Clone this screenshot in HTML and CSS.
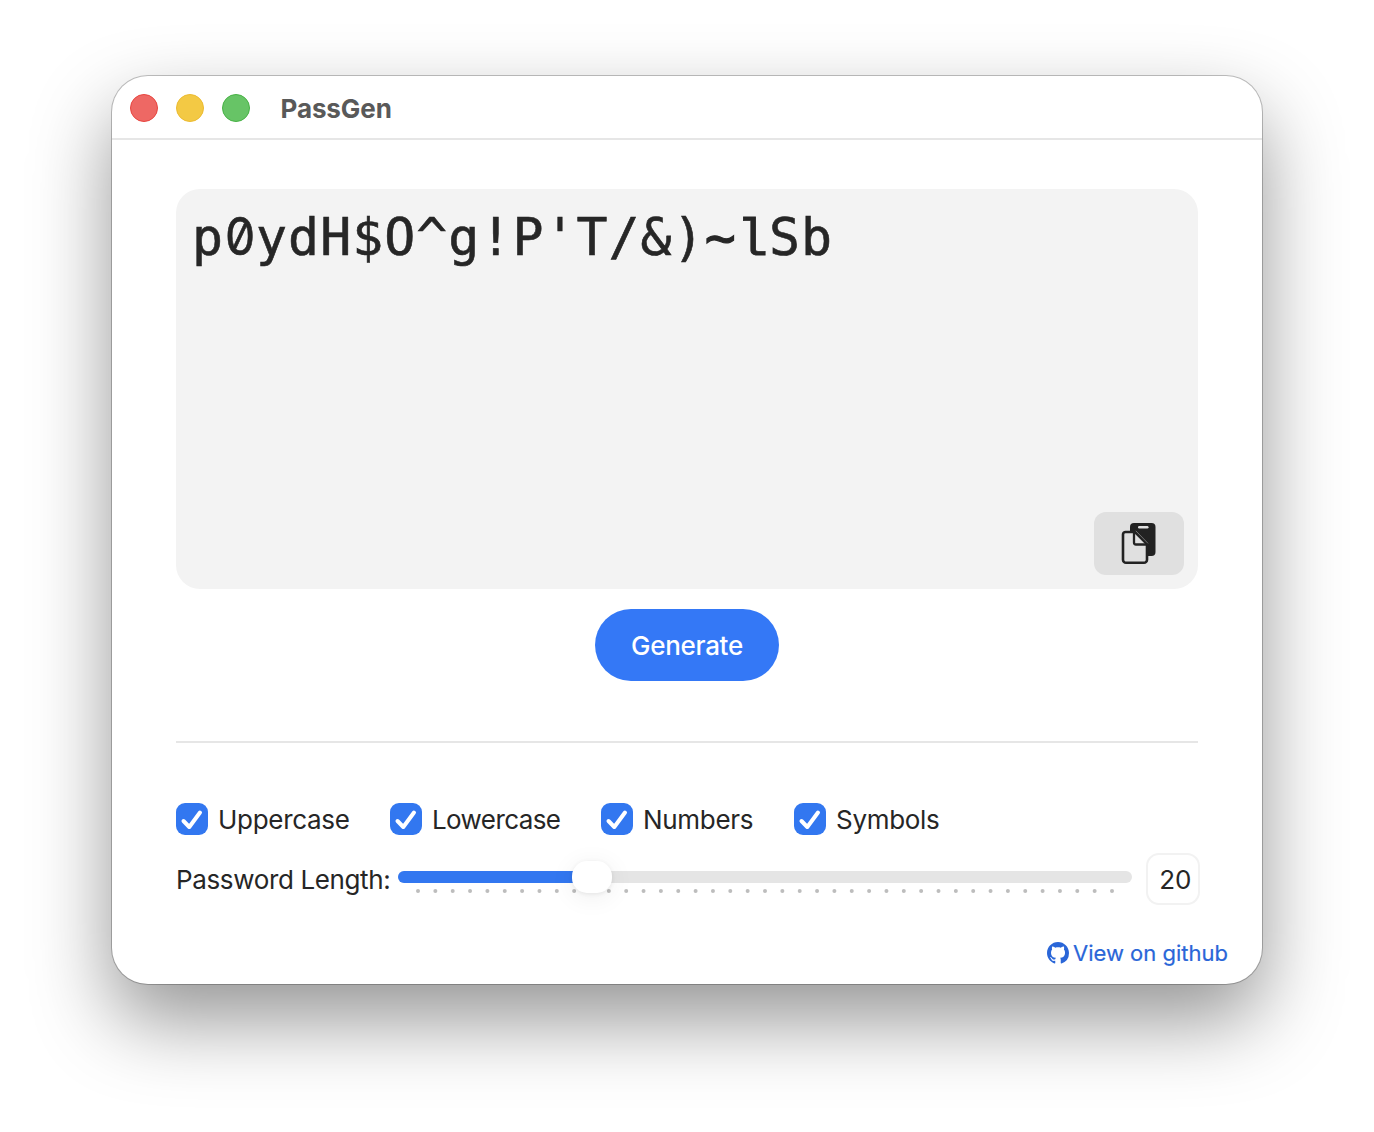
FILE: index.html
```html
<!DOCTYPE html>
<html lang="en">
<head>
<meta charset="utf-8">
<title>PassGen</title>
<link rel="stylesheet" href="styles.css">
</head>
<body>
<main class="window">
  <header class="titlebar">
    <span class="light light-close"></span>
    <span class="light light-minimize"></span>
    <span class="light light-zoom"></span>
    <h1 class="title">PassGen</h1>
  </header>
  <section class="content">
    <div class="output">
      <div class="password">p<span class="zero">0</span>ydH$O^g!P'T/&amp;)<span class="tilde">~</span><span class="ell">l</span>Sb</div>
      <button class="copy" aria-label="Copy">
        <svg width="36" height="44" viewBox="0 0 36 44">
          <rect x="9" y="1" width="25.500" height="33" rx="4" fill="#222"/>
          <rect x="17" y="4" width="10.500" height="2.500" rx="1.200" fill="#e0e0e0"/>
          <path d="M4.500 10H14L26 22V37.800A3 3 0 0 1 23 40.800H5A3 3 0 0 1 2 37.800V12.500A2.500 2.500 0 0 1 4.500 10Z" fill="#e0e0e0" stroke="#222" stroke-width="2.600"/>
          <path d="M13 10V20.500A2 2 0 0 0 15 22.500H26" fill="none" stroke="#222" stroke-width="2.300"/>
          <path d="M14.800 8.800L27 21.400" stroke="#888" stroke-width=".8"/>
        </svg>
      </button>
    </div>
    <button class="generate">Generate</button>
    <hr class="divider">
    <div class="options">
      <label class="option option-upper"><span class="box"><svg width="32" height="32" viewBox="0 0 32 32"><path d="M7.500 18L13.300 24L24 9.500"/></svg></span><span class="label">Uppercase</span></label>
      <label class="option option-lower"><span class="box"><svg width="32" height="32" viewBox="0 0 32 32"><path d="M7.500 18L13.300 24L24 9.500"/></svg></span><span class="label label-tight">Lowercase</span></label>
      <label class="option option-numbers"><span class="box"><svg width="32" height="32" viewBox="0 0 32 32"><path d="M7.500 18L13.300 24L24 9.500"/></svg></span><span class="label">Numbers</span></label>
      <label class="option option-symbols"><span class="box"><svg width="32" height="32" viewBox="0 0 32 32"><path d="M7.500 18L13.300 24L24 9.500"/></svg></span><span class="label">Symbols</span></label>
    </div>
    <div class="length">
      <span class="length-label">Password Length:</span>
      <div class="slider">
        <div class="track"><div class="fill"></div></div>
        <svg class="ticks" width="734" height="6" viewBox="0 0 734 6"><path d="M20 3H715"/></svg>
        <span class="thumb"></span>
      </div>
      <span class="value">20</span>
    </div>
    <a class="github" href="#">
      <svg width="22" height="22" viewBox="0 0 16 16"><path fill="#2a66d8" d="M8 0C3.580 0 0 3.580 0 8c0 3.540 2.290 6.530 5.470 7.590.4.070.55-.17.55-.38 0-.19-.01-.82-.01-1.490-2.010.37-2.530-.49-2.690-.94-.09-.23-.48-.94-.82-1.130-.28-.15-.68-.52-.01-.53.63-.01 1.080.58 1.230.82.72 1.210 1.870.87 2.330.66.070-.52.28-.87.51-1.070-1.780-.2-3.640-.89-3.640-3.950 0-.87.31-1.590.82-2.150-.08-.2-.36-1.020.08-2.120 0 0 .67-.21 2.200.82.64-.18 1.320-.27 2-.27s1.360.09 2 .27c1.530-1.040 2.200-.82 2.200-.82.44 1.100.16 1.920.08 2.120.51.56.82 1.270.82 2.150 0 3.070-1.870 3.750-3.650 3.950.29.25.54.73.54 1.480 0 1.070-.01 1.930-.01 2.200 0 .21.15.46.55.38A8.010 8.010 0 0 0 16 8c0-4.420-3.580-8-8-8"/></svg>
      <span class="github-text">View on github</span>
    </a>
  </section>
</main>
</body>
</html>
```
FILE: styles.css
```css
* { box-sizing: border-box; }
body {
  margin: 0;
  height: 1132px;
  padding: 76px 112px;
  background: #fff;
  color: #262626;
  font-family: Inter, "Liberation Sans", sans-serif;
  font-size: 26px;
  overflow: hidden;
}
button { border: 0; padding: 0; font: inherit; }
.window {
  width: 1150px;
  height: 908px;
  border-radius: 36px;
  background: #fff;
  box-shadow: 0 0 0 1px rgba(0, 0, 0, .23), 0 36px 80px rgba(0, 0, 0, .42);
}
.titlebar {
  height: 64px;
  padding: 0 18px 0;
  border-bottom: 2px solid #e6e6e6;
  display: flex;
  align-items: center;
  gap: 18px;
}
.light { width: 28px; height: 28px; border-radius: 50%; border: 1px solid; margin-top: 2px; }
.light-close { background: #ee6864; border-color: #e8453f; }
.light-minimize { background: #f3c944; border-color: #ecbb30; }
.light-zoom { background: #67c466; border-color: #47b245; }
.title {
  margin: 3px 0 0 12.5px;
  font-size: 26px;
  font-weight: 700;
  line-height: 32px;
  letter-spacing: -.1px;
  color: #595959;
}
.content { padding: 49px 64px 0; display: flex; flex-direction: column; }
.output {
  height: 400px;
  padding: 13px 14px 14px 16px;
  border-radius: 24px;
  background: #f3f3f3;
  display: flex;
  flex-direction: column;
  justify-content: space-between;
}
.password {
  font-family: "DejaVu Sans Mono", monospace;
  font-size: 51.5px;
  line-height: 70px;
  letter-spacing: 1.04px;
  height: 70px;
  -webkit-text-stroke: .6px #262626;
}
.ell { font-family: "Liberation Mono", monospace; font-size: 52px; -webkit-text-stroke: .9px #262626; }
.tilde { -webkit-text-stroke: 1.2px #262626; }
.zero {
  display: inline-block;
  width: 32px;
  line-height: 60px;
  text-align: center;
  font-family: Inter, sans-serif;
  font-feature-settings: "zero";
  letter-spacing: 0;
  transform: scaleX(.93);
}
.copy {
  align-self: flex-end;
  width: 90px;
  height: 63px;
  border-radius: 12px;
  background: #e0e0e0;
  display: flex;
  align-items: center;
  justify-content: center;
}
.generate {
  align-self: center;
  width: 184px;
  height: 72px;
  margin-top: 20px;
  border-radius: 36px;
  background: #3478f6;
  color: #fff;
  font-weight: 500;
  letter-spacing: -.3px;
}
.divider { width: 100%; height: 2px; margin: 60px 0; border: 0; background: #e6e6e6; }
.options { display: flex; height: 32px; }
.option { display: flex; align-items: center; gap: 10px; }
.option-upper { width: 214px; }
.option-lower { width: 211px; }
.option-numbers { width: 193px; }
.box { width: 32px; height: 32px; border-radius: 9px; background: #3277f0; display: flex; }
.box path { fill: none; stroke: #fff; stroke-width: 4; stroke-linecap: round; stroke-linejoin: round; }
.label { line-height: 32px; padding-top: 2px; letter-spacing: -.3px; }
.label-tight { letter-spacing: -.6px; }
.length { display: flex; height: 50px; margin-top: 19px; align-items: center; }
.length-label { flex: none; width: 222px; line-height: 32px; padding-top: 2px; white-space: nowrap; letter-spacing: -.36px; }
.slider { flex: none; position: relative; width: 734px; height: 50px; padding-top: 17px; }
.track { height: 12px; border-radius: 6px; background: #e5e5e5; overflow: hidden; }
.fill { width: 194px; height: 12px; background: #3277f0; }
.ticks { display: block; margin-top: 5px; }
.ticks path { stroke: #bdbdbd; stroke-width: 4; stroke-linecap: round; stroke-dasharray: 0 17.350; }
.thumb {
  position: absolute;
  left: 174px;
  top: 7px;
  width: 40px;
  height: 32px;
  border-radius: 15px;
  background: #fff;
  box-shadow: 0 1px 4px rgba(0, 0, 0, .08), 0 4px 26px rgba(0, 0, 0, .07);
}
.value {
  width: 54px;
  height: 52px;
  margin-left: 14px;
  flex: none;
  border: 2px solid #f2f2f2;
  border-radius: 13px;
  line-height: 49px;
  text-align: right;
  padding-right: 7px;
  letter-spacing: -.3px;
}
.github {
  align-self: flex-end;
  margin: 34px -30px 0 0;
  display: flex;
  align-items: center;
  gap: 4px;
  color: #2a66d8;
  font-size: 22px;
  line-height: 30px;
  text-decoration: none;
  -webkit-text-stroke: .2px #2a66d8;
}
```
